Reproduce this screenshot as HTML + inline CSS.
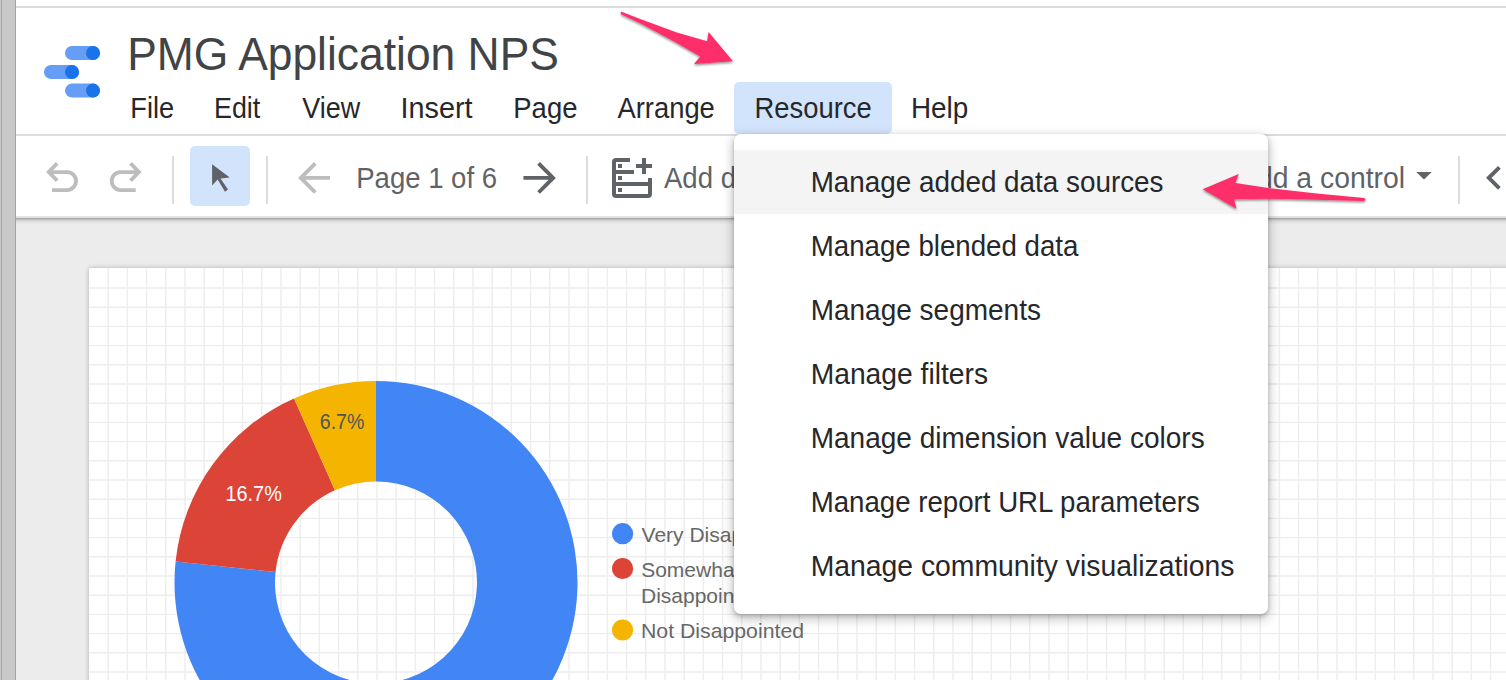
<!DOCTYPE html>
<html><head><meta charset="utf-8">
<style>
*{margin:0;padding:0;box-sizing:border-box}
html,body{width:1506px;height:680px;overflow:hidden;background:#ececec;font-family:"Liberation Sans",sans-serif;position:relative}
.abs{position:absolute}
svg{position:absolute;left:0;top:0;overflow:visible}
svg text{font-family:"Liberation Sans",sans-serif;white-space:pre}
#lstrip{left:0;top:0;width:16px;height:680px;background:#c9c9c9}
#lstrip:before{content:"";position:absolute;left:1px;top:0;width:1px;height:680px;background:#a3a3a3}
#lstrip:after{content:"";position:absolute;left:15px;top:0;width:1px;height:680px;background:#a3a3a3}
#header{left:16px;top:0;width:1490px;height:216px;background:#fff}
#tbshadow{left:16px;top:216px;width:1490px;height:9px;background:linear-gradient(to bottom,#e3e3e3 0px,#e3e3e3 1.5px,#979797 2px,#b5b5b5 3px,#d2d2d2 4.5px,#e2e2e2 6px,#ececec 9px)}
#topline{left:16px;top:6px;width:1490px;height:2px;background:#dadce0}
#midline{left:16px;top:134px;width:1490px;height:2px;background:#dcdde0}
#reshl{left:734px;top:82px;width:158px;height:52px;background:#d2e3fc;border-radius:5px}
.sep{position:absolute;top:156px;width:2px;height:48px;background:#dadce0}
#page{left:89px;top:268px;width:1430px;height:420px;background-color:#fff;border-radius:2px;
 box-shadow:0 0 5px rgba(0,0,0,0.26)}
#menu{left:734px;top:134px;width:534px;height:480px;background:#fff;border-radius:7px;box-shadow:0 4px 11px 2px rgba(0,0,0,0.2),0 2px 4px rgba(0,0,0,0.2)}
#menu .hl{position:absolute;left:0;top:16px;width:534px;height:64px;background:#f4f4f4}
</style></head><body>
<div id="lstrip" class="abs"></div>
<div id="header" class="abs"></div>
<div id="tbshadow" class="abs"></div>
<div id="topline" class="abs"></div>
<div id="midline" class="abs"></div>
<div id="reshl" class="abs"></div>
<div class="sep" style="left:172px"></div>
<div class="abs" style="left:190px;top:146px;width:60px;height:60px;background:#d2e3fc;border-radius:5px"></div>
<div class="sep" style="left:266px"></div>
<div class="sep" style="left:586px"></div>
<div class="sep" style="left:1458px"></div>
<svg width="1506" height="230" viewBox="0 0 1506 230">
 <!-- logo -->
 <rect x="65" y="46" width="35" height="14" rx="7" fill="#669df6"/>
 <circle cx="93" cy="53" r="7" fill="#1a73e8"/>
 <rect x="44" y="65" width="35" height="14" rx="7" fill="#669df6"/>
 <circle cx="72" cy="72" r="7" fill="#1a73e8"/>
 <rect x="65" y="83.6" width="35" height="14" rx="7" fill="#669df6"/>
 <circle cx="93" cy="90.6" r="7" fill="#1a73e8"/>
 <!-- toolbar icons -->
 <g id="undo" fill="none" stroke="#bdbdbd" stroke-width="3.8" stroke-linejoin="miter">
  <path d="M57.15 163.4 L48.75 172 L57.15 180.6"/>
  <path d="M50 172.05 H67 A9 9 0 0 1 67 190.05 H52"/>
 </g>
 <use href="#undo" transform="translate(187.7,0) scale(-1,1)"/>
 <path d="M212.1 164.3 L229.8 177.5 L220.5 178.5 L228 189.4 L225 191.8 L217.7 179.6 L212.1 185.5 Z" fill="#5f6368"/>
 <path d="M315.3 163.3 L300.8 177.9 L315.3 192.5 M300 177.9 H330" fill="none" stroke="#bdbdbd" stroke-width="3.9"/>
 <path d="M538.6 163.3 L553.1 177.9 L538.6 192.5 M523.4 177.9 H554" fill="none" stroke="#5f6368" stroke-width="3.9"/>
 <g fill="#5f6368">
  <path d="M612 162 A4 4 0 0 1 616 158 H630 V162 H616 V170 H634 V174 H616 V182 H648 V178 H652 V194 A4 4 0 0 1 648 198 H616 A4 4 0 0 1 612 194 Z M616 186 V194 H648 V186 Z"/>
  <rect x="618" y="164" width="4" height="4"/><rect x="618" y="176" width="4" height="4"/><rect x="618" y="188" width="4" height="4"/>
  <rect x="642" y="158" width="4" height="16"/><rect x="636" y="164" width="16" height="4"/>
 </g>
 <path d="M1416.3 172.1 H1431.7 L1424 179.6 Z" fill="#5f6368"/>
 <path d="M1499.4 167.3 L1488.8 177.8 L1499.4 188.3" fill="none" stroke="#5f6368" stroke-width="3.9"/>
<text x="127.17" y="70.1" font-size="46" fill="#404447" textLength="431.69" lengthAdjust="spacingAndGlyphs">PMG Application NPS</text>
<text x="130.34" y="117.8" font-size="29" fill="#26272a" textLength="43.79" lengthAdjust="spacingAndGlyphs">File</text>
<text x="213.96" y="117.8" font-size="29" fill="#26272a" textLength="46.33" lengthAdjust="spacingAndGlyphs">Edit</text>
<text x="302.23" y="117.8" font-size="29" fill="#26272a" textLength="57.95" lengthAdjust="spacingAndGlyphs">View</text>
<text x="400.54" y="117.8" font-size="29" fill="#26272a" textLength="71.95" lengthAdjust="spacingAndGlyphs">Insert</text>
<text x="513.32" y="117.8" font-size="29" fill="#26272a" textLength="64.12" lengthAdjust="spacingAndGlyphs">Page</text>
<text x="617.53" y="117.8" font-size="29" fill="#26272a" textLength="97.28" lengthAdjust="spacingAndGlyphs">Arrange</text>
<text x="754.52" y="117.8" font-size="29" fill="#26272a" textLength="117.14" lengthAdjust="spacingAndGlyphs">Resource</text>
<text x="910.99" y="117.8" font-size="29" fill="#26272a" textLength="57.33" lengthAdjust="spacingAndGlyphs">Help</text>
<text x="356.21" y="187.8" font-size="29" fill="#5f6368" textLength="140.85" lengthAdjust="spacingAndGlyphs">Page 1 of 6</text>
<text x="664" y="187.7" font-size="29" fill="#5f6368" textLength="110.3" lengthAdjust="spacingAndGlyphs">Add data</text>
<text x="1238.1" y="187.8" font-size="29" fill="#5f6368" textLength="166.9" lengthAdjust="spacingAndGlyphs">Add a control</text>
</svg>
<div id="page" class="abs"></div>
<svg width="1506" height="680" viewBox="0 0 1506 680"><g stroke="#ededed" stroke-width="1.4"><path d="M108.20 268V680"/><path d="M127.40 268V680"/><path d="M146.60 268V680"/><path d="M165.80 268V680"/><path d="M185.00 268V680"/><path d="M204.20 268V680"/><path d="M223.40 268V680"/><path d="M242.60 268V680"/><path d="M261.80 268V680"/><path d="M281.00 268V680"/><path d="M300.20 268V680"/><path d="M319.40 268V680"/><path d="M338.60 268V680"/><path d="M357.80 268V680"/><path d="M377.00 268V680"/><path d="M396.20 268V680"/><path d="M415.40 268V680"/><path d="M434.60 268V680"/><path d="M453.80 268V680"/><path d="M473.00 268V680"/><path d="M492.20 268V680"/><path d="M511.40 268V680"/><path d="M530.60 268V680"/><path d="M549.80 268V680"/><path d="M569.00 268V680"/><path d="M588.20 268V680"/><path d="M607.40 268V680"/><path d="M626.60 268V680"/><path d="M645.80 268V680"/><path d="M665.00 268V680"/><path d="M684.20 268V680"/><path d="M703.40 268V680"/><path d="M722.60 268V680"/><path d="M741.80 268V680"/><path d="M761.00 268V680"/><path d="M780.20 268V680"/><path d="M799.40 268V680"/><path d="M818.60 268V680"/><path d="M837.80 268V680"/><path d="M857.00 268V680"/><path d="M876.20 268V680"/><path d="M895.40 268V680"/><path d="M914.60 268V680"/><path d="M933.80 268V680"/><path d="M953.00 268V680"/><path d="M972.20 268V680"/><path d="M991.40 268V680"/><path d="M1010.60 268V680"/><path d="M1029.80 268V680"/><path d="M1049.00 268V680"/><path d="M1068.20 268V680"/><path d="M1087.40 268V680"/><path d="M1106.60 268V680"/><path d="M1125.80 268V680"/><path d="M1145.00 268V680"/><path d="M1164.20 268V680"/><path d="M1183.40 268V680"/><path d="M1202.60 268V680"/><path d="M1221.80 268V680"/><path d="M1241.00 268V680"/><path d="M1260.20 268V680"/><path d="M1279.40 268V680"/><path d="M1298.60 268V680"/><path d="M1317.80 268V680"/><path d="M1337.00 268V680"/><path d="M1356.20 268V680"/><path d="M1375.40 268V680"/><path d="M1394.60 268V680"/><path d="M1413.80 268V680"/><path d="M1433.00 268V680"/><path d="M1452.20 268V680"/><path d="M1471.40 268V680"/><path d="M1490.60 268V680"/><path d="M89 288.00H1506"/><path d="M89 307.20H1506"/><path d="M89 326.40H1506"/><path d="M89 345.60H1506"/><path d="M89 364.80H1506"/><path d="M89 384.00H1506"/><path d="M89 403.20H1506"/><path d="M89 422.40H1506"/><path d="M89 441.60H1506"/><path d="M89 460.80H1506"/><path d="M89 480.00H1506"/><path d="M89 499.20H1506"/><path d="M89 518.40H1506"/><path d="M89 537.60H1506"/><path d="M89 556.80H1506"/><path d="M89 576.00H1506"/><path d="M89 595.20H1506"/><path d="M89 614.40H1506"/><path d="M89 633.60H1506"/><path d="M89 652.80H1506"/><path d="M89 672.00H1506"/></g></svg>
<svg width="1506" height="680" viewBox="0 0 1506 680">
<path d="M376.00 381.00A201.5 201.5 0 1 1 175.60 561.44L275.55 571.94A101 101 0 1 0 376.00 481.50Z" fill="#4285f4"/>
<path d="M175.60 561.44A201.5 201.5 0 0 1 294.04 398.42L334.92 490.23A101 101 0 0 0 275.55 571.94Z" fill="#db4437"/>
<path d="M294.04 398.42A201.5 201.5 0 0 1 376.00 381.00L376.00 481.50A101 101 0 0 0 334.92 490.23Z" fill="#f4b400"/>
<circle cx="622.6" cy="533.7" r="10.6" fill="#4285f4"/>
<circle cx="622.6" cy="568.5" r="10.6" fill="#db4437"/>
<circle cx="622.6" cy="630" r="10.6" fill="#f4b400"/>
<text x="319.75" y="429.2" font-size="21.5" fill="#50555a" textLength="44.59" lengthAdjust="spacingAndGlyphs">6.7%</text>
<text x="225.47" y="501.3" font-size="21.5" fill="#ffffff" textLength="56.33" lengthAdjust="spacingAndGlyphs">16.7%</text>
<text x="641.6" y="542.2" font-size="21" fill="#676767">Very Disappointed</text>
<text x="641.2" y="576.5" font-size="21" fill="#676767">Somewhat</text>
<text x="641" y="603.1" font-size="21" fill="#676767">Disappointed</text>
<text x="640.96" y="638" font-size="21" fill="#676767" textLength="163.09" lengthAdjust="spacingAndGlyphs">Not Disappointed</text>
</svg>
<div id="menu" class="abs"><div class="hl"></div></div>
<svg width="1506" height="680" viewBox="0 0 1506 680">
<text x="810.69" y="192" font-size="29" fill="#26272a" textLength="352.79" lengthAdjust="spacingAndGlyphs">Manage added data sources</text>
<text x="810.7" y="256" font-size="29" fill="#26272a" textLength="267.77" lengthAdjust="spacingAndGlyphs">Manage blended data</text>
<text x="810.68" y="320" font-size="29" fill="#26272a" textLength="230.28" lengthAdjust="spacingAndGlyphs">Manage segments</text>
<text x="810.66" y="384" font-size="29" fill="#26272a" textLength="177.38" lengthAdjust="spacingAndGlyphs">Manage filters</text>
<text x="810.68" y="448" font-size="29" fill="#26272a" textLength="394.0" lengthAdjust="spacingAndGlyphs">Manage dimension value colors</text>
<text x="810.7" y="512" font-size="29" fill="#26272a" textLength="389.2" lengthAdjust="spacingAndGlyphs">Manage report URL parameters</text>
<text x="810.66" y="576" font-size="29" fill="#26272a" textLength="423.72" lengthAdjust="spacingAndGlyphs">Manage community visualizations</text>
 <defs><filter id="sh" x="-10%" y="-20%" width="120%" height="160%"><feDropShadow dx="0" dy="1.5" stdDeviation="1" flood-color="#000" flood-opacity="0.45"/></filter></defs>
 <g fill="#fd2e69" filter="url(#sh)">
  <path d="M621.5 11.8 L641.5 19.6 L676.8 32.4 L707.2 41.2 L708.6 31.9 L733 61.2 L694 63.9 L700.2 56.6 L676.8 43 L641.5 24 L621.5 14.6 Q619.6 13.2 621.5 11.8 Z"/>
  <path d="M1202.7 189.3 L1238.75 174 L1235.3 183 L1270 188.3 L1316.5 193.6 L1364.2 198.1 Q1366.6 199.6 1364.2 201.1 L1316.5 199.8 L1270 198.8 L1234 199.2 L1236.5 208.75 Z"/>
 </g>
</svg>
</body></html>
